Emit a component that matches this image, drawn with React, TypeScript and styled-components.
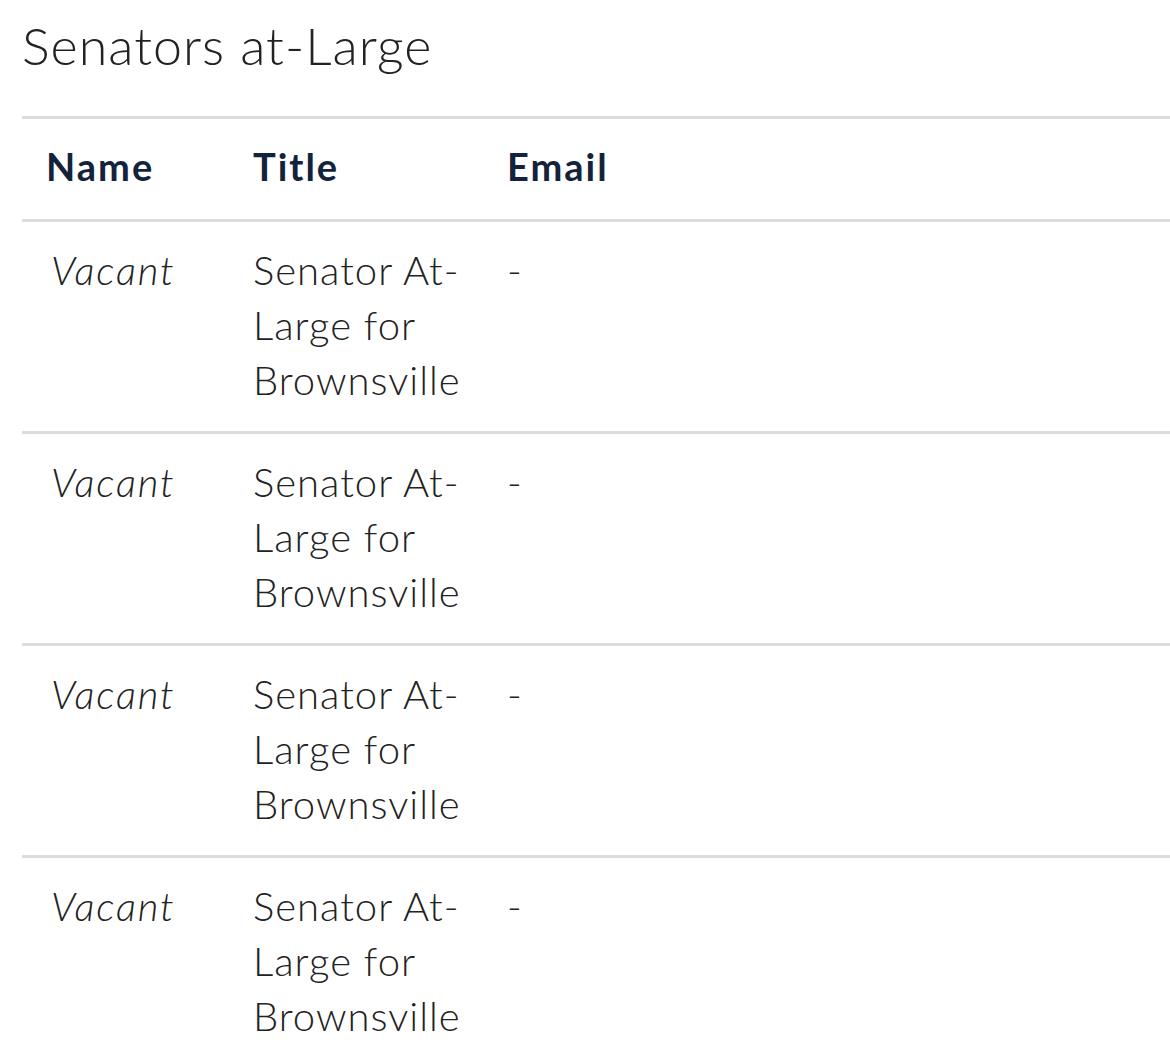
import React from "react";
import styled, { createGlobalStyle } from "styled-components";

const Global = createGlobalStyle`
  html, body { margin: 0; padding: 0; background: #fff; }
  body { font-family: Lato, "Open Sans", sans-serif; color: #222; }
`;

const Page = styled.div`
  padding: 14px 0 0 22px;
`;

const Heading = styled.h2`
  margin: 0 0 40px;
  font-size: 52px;
  line-height: 62px;
  font-weight: 300;
  letter-spacing: 1px;
  color: #222;
`;

const Table = styled.table`
  width: 100%;
  border-collapse: separate;
  border-spacing: 0;
  table-layout: fixed;
`;

const HeadCell = styled.th<{ $w?: number }>`
  ${(p) => (p.$w ? `width: ${p.$w}px;` : "")}
  text-align: left;
  vertical-align: middle;
  padding: 0 24px 6px;
  height: 94px;
  font-size: 38px;
  line-height: 46px;
  font-weight: 700;
  letter-spacing: 2px;
  color: #14233c;
  border-top: 3px solid #dcdcdc;
  border-bottom: 3px solid #dcdcdc;
`;

const Cell = styled.td<{ $italic?: boolean; $tight?: boolean }>`
  vertical-align: top;
  padding: 21px ${(p) => (p.$tight ? 4 : 24)}px 23px ${(p) => (p.$italic ? 29 : 24)}px;
  font-size: 40px;
  line-height: 55px;
  font-weight: 300;
  letter-spacing: ${(p) => (p.$italic ? 1.8 : 1)}px;
  color: #222;
  font-style: ${(p) => (p.$italic ? "italic" : "normal")};
  border-bottom: 3px solid #dcdcdc;
`;

const rows = Array.from({ length: 4 }, () => ({
  name: "Vacant",
  title: "Senator At-Large for Brownsville",
  email: "-",
}));

export default function App() {
  return (
    <Page>
      <Global />
      <Heading>Senators at-Large</Heading>
      <Table>
        <thead>
          <tr>
            <HeadCell $w={159}>Name</HeadCell>
            <HeadCell $w={206}>Title</HeadCell>
            <HeadCell>Email</HeadCell>
          </tr>
        </thead>
        <tbody>
          {rows.map((r, i) => (
            <tr key={i}>
              <Cell $italic>{r.name}</Cell>
              <Cell $tight>{r.title}</Cell>
              <Cell>{r.email}</Cell>
            </tr>
          ))}
        </tbody>
      </Table>
    </Page>
  );
}
